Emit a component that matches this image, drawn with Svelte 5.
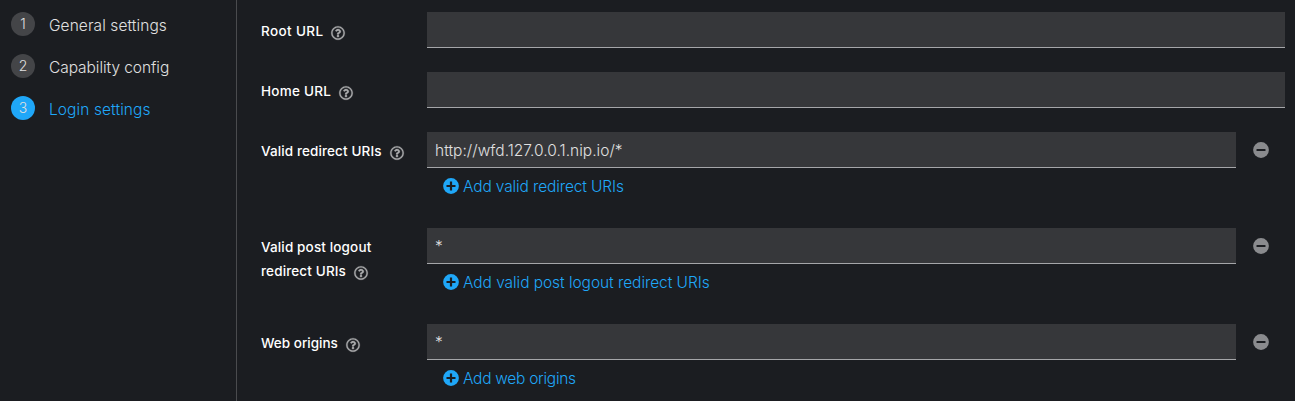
<script>
  const steps = [
    { label: 'General settings', tracking: 0.08 },
    { label: 'Capability config', tracking: -0.06 },
    { label: 'Login settings', tracking: 0.09, active: true }
  ];
  const fields = [
    { lines: ['Root URL'], tracking: 0.38 },
    { lines: ['Home URL'], tracking: 0.25 },
    { lines: ['Valid redirect URIs'], value: 'http://wfd.127.0.0.1.nip.io/*', valueTracking: 0.02, add: 'Add valid redirect URIs', tracking: 0.11, addTracking: -0.13 },
    { lines: ['Valid post logout', 'redirect URIs'], value: '*', add: 'Add valid post logout redirect URIs', tracking: 0.14, addTracking: -0.06 },
    { lines: ['Web origins'], value: '*', add: 'Add web origins', tracking: 0, addTracking: -0.28 }
  ];
</script>

<div class="wizard">
  <nav>
    {#each steps as step, i}
      <div class="step" class:active={step.active}>
        <span class="num">{i + 1}</span>
        <span class="name" style:letter-spacing="{step.tracking}px">{step.label}</span>
      </div>
    {/each}
  </nav>
  <main>
    {#each fields as field}
      <div class="row">
        <div class="label">
          {#each field.lines as line, i}
            <div class="line">
              <span style:letter-spacing="{field.tracking}px">{line}</span>
              {#if i === field.lines.length - 1}
                <svg class="help" width="14" height="14" viewBox="0 0 512 512" fill="currentColor" stroke="currentColor" stroke-width="10"><path d="M256 8C119 8 8 119 8 256s111 248 248 248 248-111 248-248S393 8 256 8zm0 448c-110.500 0-200-89.500-200-200S145.500 56 256 56s200 89.500 200 200-89.500 200-200 200zm107.200-255.200c0 67.100-72.400 68.100-72.400 92.900V300c0 6.600-5.400 12-12 12h-45.600c-6.600 0-12-5.400-12-12v-8.700c0-35.700 27.100-50 47.600-61.500 17.600-9.800 28.300-16.500 28.300-29.500 0-17.200-22-28.700-39.800-28.700-23.200 0-33.900 11-48.900 30-4.100 5.100-11.500 6.100-16.700 2.100l-27.800-21.100c-5.100-3.900-6.300-11.100-2.600-16.400C184.800 131.500 214.900 112 261.800 112c49.100 0 101.400 38.300 101.400 88.800zM298 368c0 23.200-18.800 42-42 42s-42-18.800-42-42 18.800-42 42-42 42 18.800 42 42z" /></svg>
              {/if}
            </div>
          {/each}
        </div>
        <div class="control">
          <div class="entry">
            <div class="input"><span style:letter-spacing="{field.valueTracking ?? 0}px">{field.value ?? ''}</span></div>
            {#if field.add}
              <div class="remove">
                <svg width="16" height="16" viewBox="0 0 16 16"><circle cx="8" cy="8" r="7.900" fill="#8a8b8e" /><rect x="3.500" y="6.900" width="9" height="2.200" rx=".4" fill="#1b1d21" /></svg>
              </div>
            {/if}
          </div>
          {#if field.add}
            <div class="add">
              <svg width="16" height="16" viewBox="0 0 16 16"><circle cx="8" cy="8" r="7.900" fill="#1fa7f8" /><path d="M6.900 3.500h2.200v3.400h3.400v2.200H9.100v3.400H6.900V9.100H3.500V6.900h3.400z" fill="#1b1d21" /></svg>
              <span style:letter-spacing="{field.addTracking}px">{field.add}</span>
            </div>
          {/if}
        </div>
      </div>
    {/each}
  </main>
</div>

<style>
  :global(body) { background: #1b1d21; overflow: hidden; }
  .wizard {
    display: flex;
    width: 1295px;
    height: 401px;
    box-sizing: border-box;
    overflow: hidden;
    background: #1b1d21;
    color: #e0e0e0;
    font-family: Inter, "Open Sans", sans-serif;
    font-size: 15.500px;
    font-weight: 300;
    line-height: 24px;
    white-space: nowrap;
  }
  nav {
    flex: none;
    border-right: 1px solid #4a4b4e;
    padding: 12px 0 0 11px;
    width: 225px;
    display: flex;
    flex-direction: column;
    gap: 18px;
  }
  .step { display: flex; gap: 14px; height: 24px; }
  .num {
    width: 24px;
    height: 24px;
    border-radius: 50%;
    background: #444548;
    text-align: center;
    font-size: 14px;
  }
  .name { padding-top: 2px; }
  .active { color: #1fa7f8; }
  .active .num { background: #1fa7f8; color: #e0e0e0; }
  main {
    flex: 1;
    padding: 12px 10px 0 24px;
    display: flex;
    flex-direction: column;
    gap: 24px;
  }
  .row { display: grid; grid-template-columns: 166px 1fr; }
  .label { padding-top: 7px; font-size: 13.500px; font-weight: 500; color: #fff; }
  .line { display: flex; height: 24px; }
  .help { color: #aaabac; margin: 6.600px 0 0 8px; overflow: visible; }
  .entry { display: flex; }
  .input {
    flex: 1;
    height: 36px;
    box-sizing: border-box;
    padding: 7px 8px 0;
    background: #36373a;
    border-bottom: 1px solid #a5a6a9;
  }
  .remove { width: 49px; box-sizing: border-box; padding: 10px 0 0 17px; }
  .remove svg, .add svg { display: block; flex: none; }
  .add {
    display: flex;
    height: 36px;
    box-sizing: border-box;
    padding: 7px 0 0 16px;
    gap: 4px;
    color: #1fa7f8;
  }
  .add svg { margin-top: 3px; }
</style>
